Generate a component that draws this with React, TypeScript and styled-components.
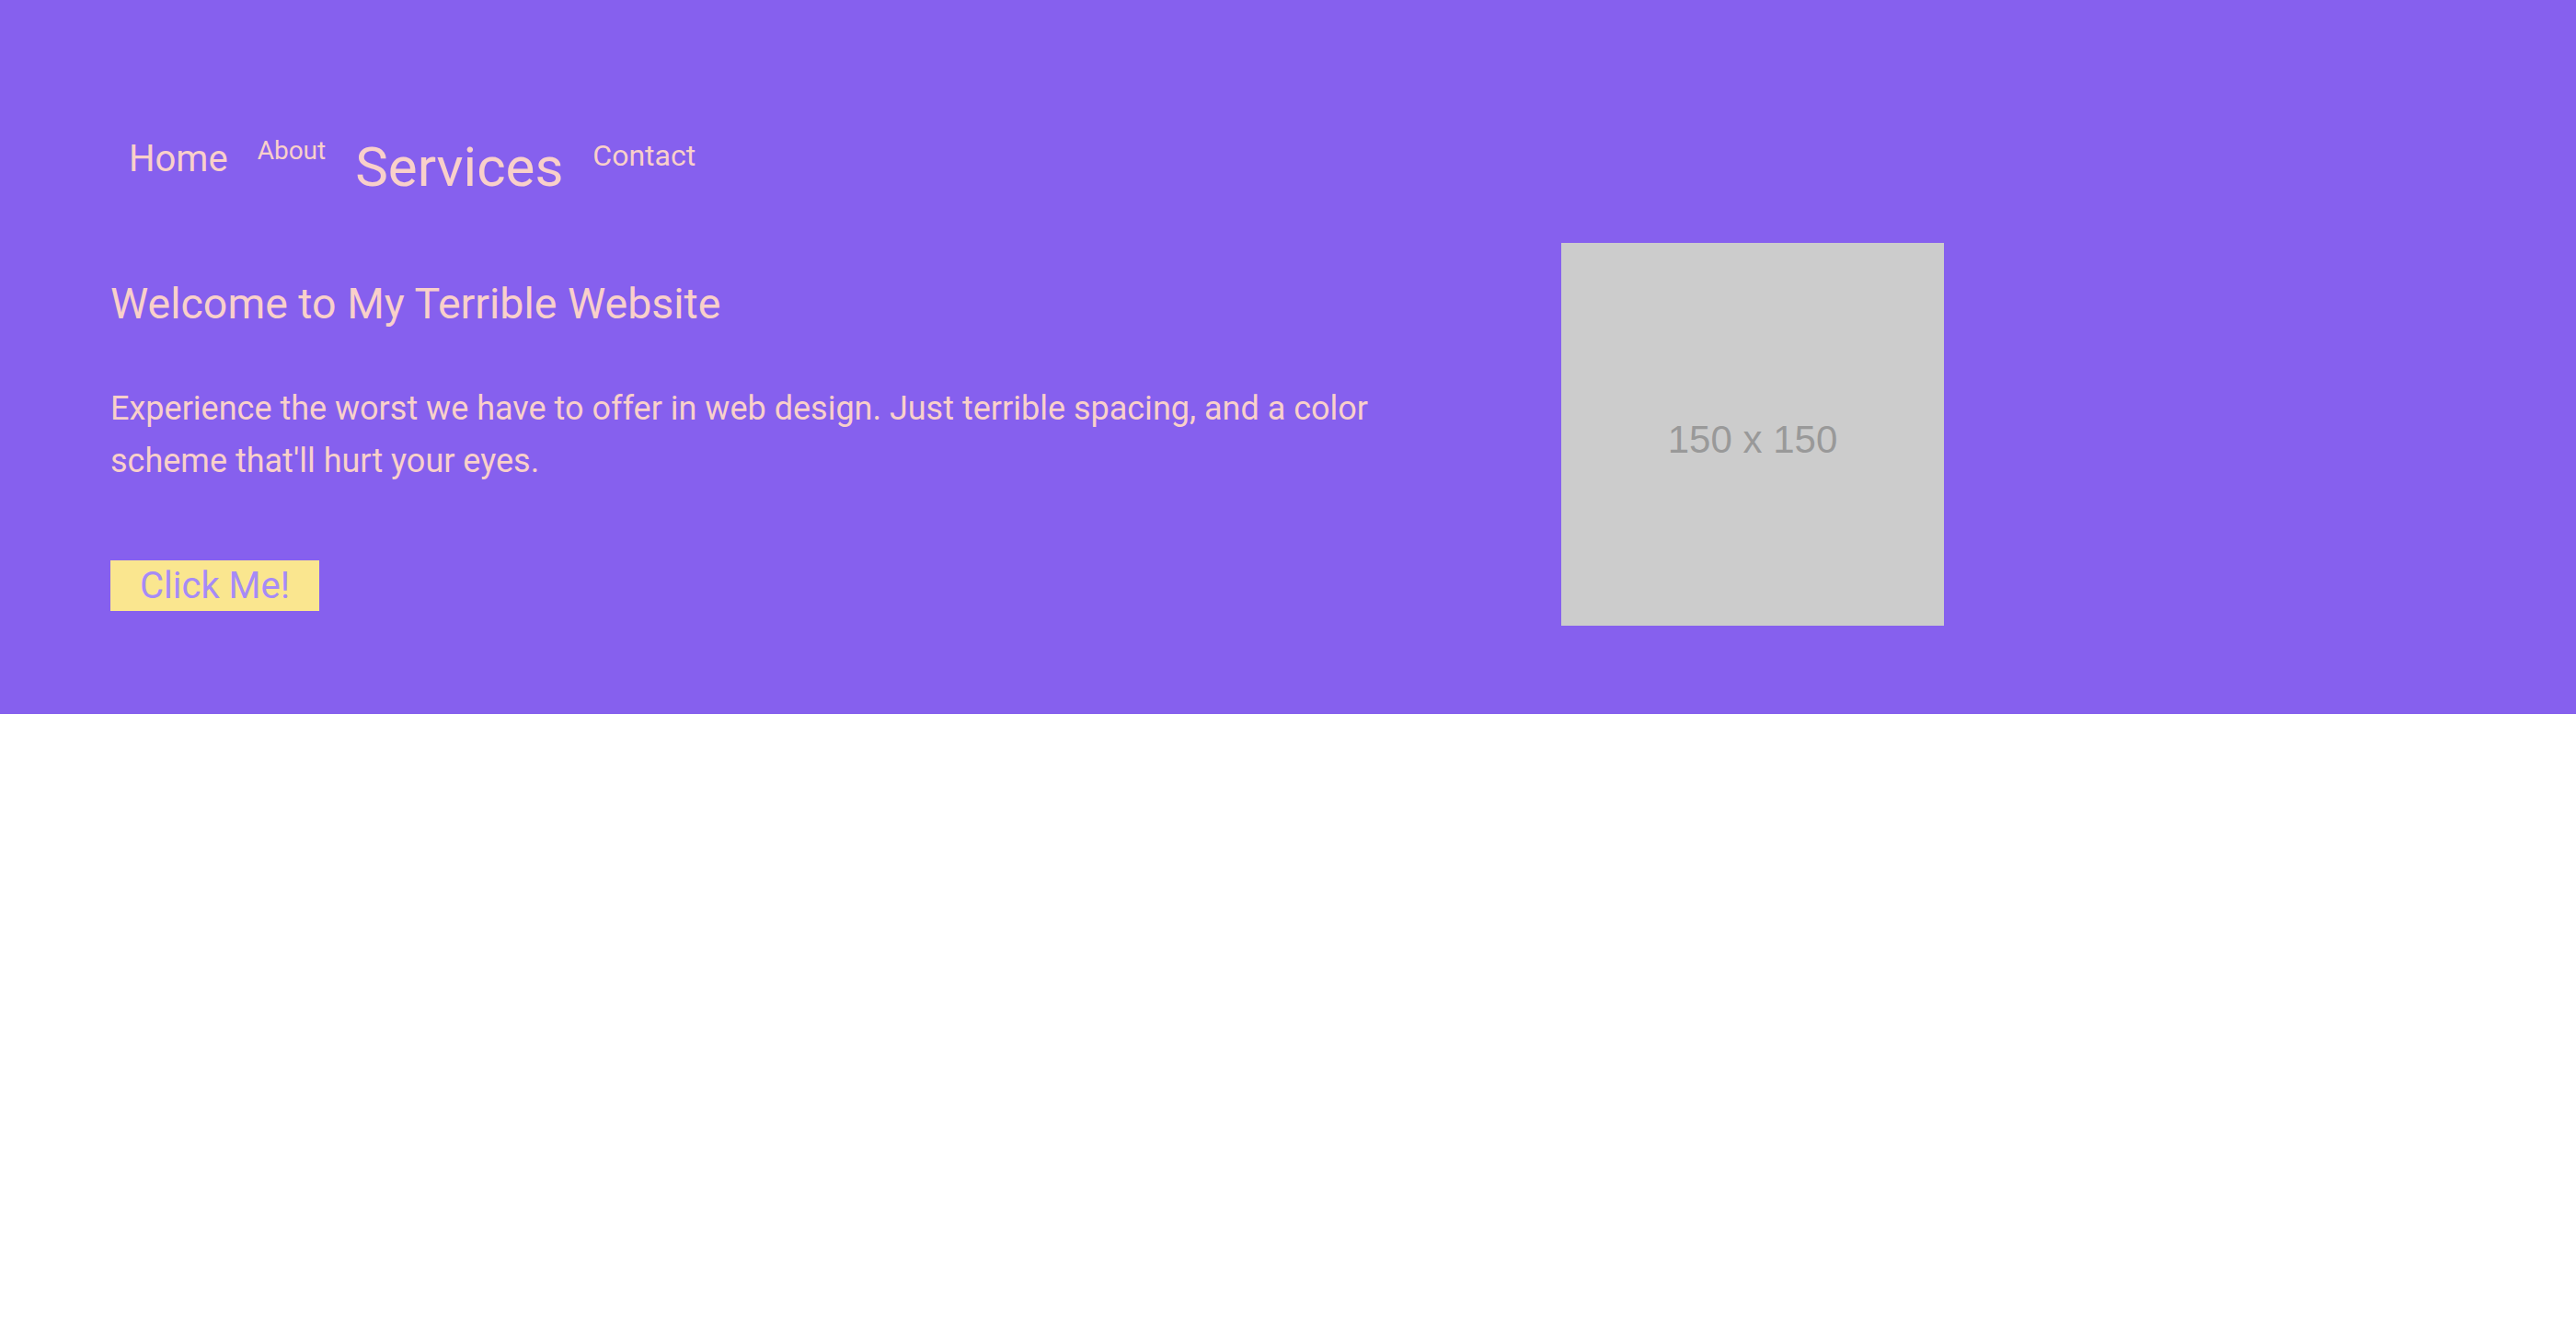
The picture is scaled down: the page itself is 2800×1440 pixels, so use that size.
import React from "react";
import styled, { createGlobalStyle } from "styled-components";

const Global = createGlobalStyle`
  html, body { margin: 0; padding: 0; background: #ffffff; }
  body { font-family: Roboto, "Noto Sans", sans-serif; }
`;

const Hero = styled.section`
  background: #8660ee;
  color: #f9d0ca;
  padding: 148px 120px 96px;
  display: flex;
  flex-direction: column;
`;

const Nav = styled.nav`
  display: flex;
  align-items: flex-start;
  gap: 32px;
  margin-left: 20px;
`;

const NavLink = styled.a<{ $size: number; $shift: number }>`
  font-size: ${(p) => p.$size}px;
  margin-top: ${(p) => p.$shift}px;
  color: #f9d0ca;
  text-decoration: none;
  line-height: 1.2;
`;

const Content = styled.div`
  display: grid;
  grid-template-columns: 1440px 416px;
  column-gap: 137px;
  align-items: start;
  margin-top: 46px;
`;

const TextCol = styled.div`
  display: flex;
  flex-direction: column;
  align-items: flex-start;
  padding-top: 39px;
`;

const Title = styled.h1`
  margin: 0;
  font-size: 46.5px;
  font-weight: 400;
  line-height: 1.2;
`;

const Lead = styled.p`
  margin: 57px 0 0;
  font-size: 36px;
  line-height: 57.6px;
`;

const Button = styled.button`
  margin-top: 78px;
  background: #fae68f;
  color: #a68bf7;
  border: none;
  font-family: Roboto, "Noto Sans", sans-serif;
  font-size: 40px;
  padding: 4px 32px;
  line-height: 47px;
  cursor: pointer;
`;

const Placeholder = styled.div`
  width: 416px;
  height: 416px;
  background: #cccccc;
  color: #999999;
  display: flex;
  align-items: center;
  justify-content: center;
  font-family: "Liberation Sans", Arial, sans-serif;
  font-size: 42px;
  padding-top: 12px;
  box-sizing: border-box;
`;

export default function App() {
  return (
    <>
      <Global />
      <Hero>
        <Nav>
          <NavLink href="#" $size={40} $shift={1}>Home</NavLink>
          <NavLink href="#" $size={28} $shift={-1}>About</NavLink>
          <NavLink href="#" $size={60} $shift={-2}>Services</NavLink>
          <NavLink href="#" $size={32} $shift={2}>Contact</NavLink>
        </Nav>
        <Content>
          <TextCol>
            <Title>Welcome to My Terrible Website</Title>
            <Lead>
              Experience the worst we have to offer in web design. Just terrible spacing, and a color scheme
              that'll hurt your eyes.
            </Lead>
            <Button>Click Me!</Button>
          </TextCol>
          <Placeholder>150 x 150</Placeholder>
        </Content>
      </Hero>
    </>
  );
}
